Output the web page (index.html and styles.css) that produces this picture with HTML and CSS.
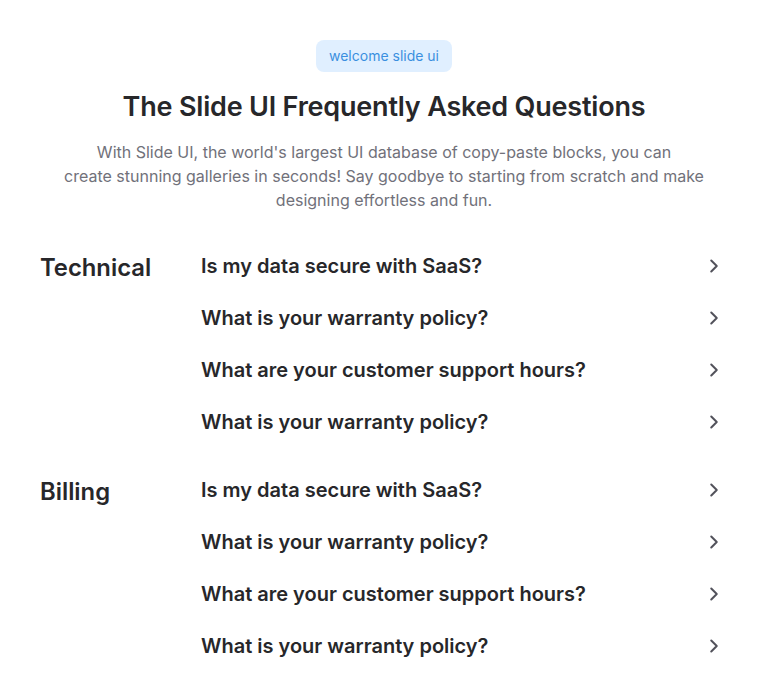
FILE: index.html
```html
<!DOCTYPE html>
<html lang="en">
<head>
<meta charset="utf-8">
<title>FAQ</title>
<link rel="stylesheet" href="styles.css">
</head>
<body>
<main class="faq">
  <header class="intro">
    <span class="badge">welcome slide ui</span>
    <h1 class="title">The Slide UI Frequently Asked Questions</h1>
    <p class="lead">With Slide UI, the world's largest UI database of copy-paste blocks, you can<br>create stunning galleries in seconds! Say goodbye to starting from scratch and make designing effortless and fun.</p>
  </header>

  <section class="group">
    <h2 class="group-title">Technical</h2>
    <ul class="questions">
      <li class="q"><span>Is my data secure with SaaS?</span><svg class="chev" viewBox="0 0 24 24"><path d="M9 6l6 6-6 6"/></svg></li>
      <li class="q"><span>What is your warranty policy?</span><svg class="chev" viewBox="0 0 24 24"><path d="M9 6l6 6-6 6"/></svg></li>
      <li class="q"><span>What are your customer support hours?</span><svg class="chev" viewBox="0 0 24 24"><path d="M9 6l6 6-6 6"/></svg></li>
      <li class="q"><span>What is your warranty policy?</span><svg class="chev" viewBox="0 0 24 24"><path d="M9 6l6 6-6 6"/></svg></li>
    </ul>
  </section>

  <section class="group">
    <h2 class="group-title">Billing</h2>
    <ul class="questions">
      <li class="q"><span>Is my data secure with SaaS?</span><svg class="chev" viewBox="0 0 24 24"><path d="M9 6l6 6-6 6"/></svg></li>
      <li class="q"><span>What is your warranty policy?</span><svg class="chev" viewBox="0 0 24 24"><path d="M9 6l6 6-6 6"/></svg></li>
      <li class="q"><span>What are your customer support hours?</span><svg class="chev" viewBox="0 0 24 24"><path d="M9 6l6 6-6 6"/></svg></li>
      <li class="q"><span>What is your warranty policy?</span><svg class="chev" viewBox="0 0 24 24"><path d="M9 6l6 6-6 6"/></svg></li>
    </ul>
  </section>
</main>
</body>
</html>
```
FILE: styles.css
```css
* { box-sizing: border-box; }
html, body { margin: 0; padding: 0; background: #ffffff; }
body {
  font-family: Inter, "Noto Sans", sans-serif;
  color: #27272a;
}
.faq {
  padding: 40px 40px 0;
}
.intro {
  display: flex;
  flex-direction: column;
  align-items: center;
  text-align: center;
}
.badge {
  display: inline-block;
  background: #e0efff;
  color: #3b8fe0;
  font-size: 14px;
  line-height: 20px;
  padding: 6px 13px;
  border-radius: 8px;
}
.title {
  margin: 17px 0 0;
  font-size: 27px;
  line-height: 36px;
  font-weight: 600;
  color: #27272a;
  letter-spacing: -0.2px;
}
.lead {
  margin: 15px 0 0;
  max-width: 660px;
  font-size: 16px;
  line-height: 24px;
  color: #71717a;
}
.group {
  display: grid;
  grid-template-columns: 161px 1fr;
  margin-top: 40px;
}
.group + .group { margin-top: 40px; }
.group-title {
  margin: 0;
  font-size: 23.8px;
  line-height: 32px;
  font-weight: 600;
  color: #27272a;
}
.questions {
  list-style: none;
  margin: 0;
  padding: 0;
  display: flex;
  flex-direction: column;
  gap: 24px;
}
.q {
  display: flex;
  justify-content: space-between;
  align-items: center;
  font-size: 20px;
  line-height: 28px;
  font-weight: 600;
  color: #27272a;
}
.chev {
  width: 22px;
  height: 22px;
  margin-right: 3px;
  fill: none;
  stroke: #52525b;
  stroke-width: 2.2;
  stroke-linecap: round;
  stroke-linejoin: round;
}
```
